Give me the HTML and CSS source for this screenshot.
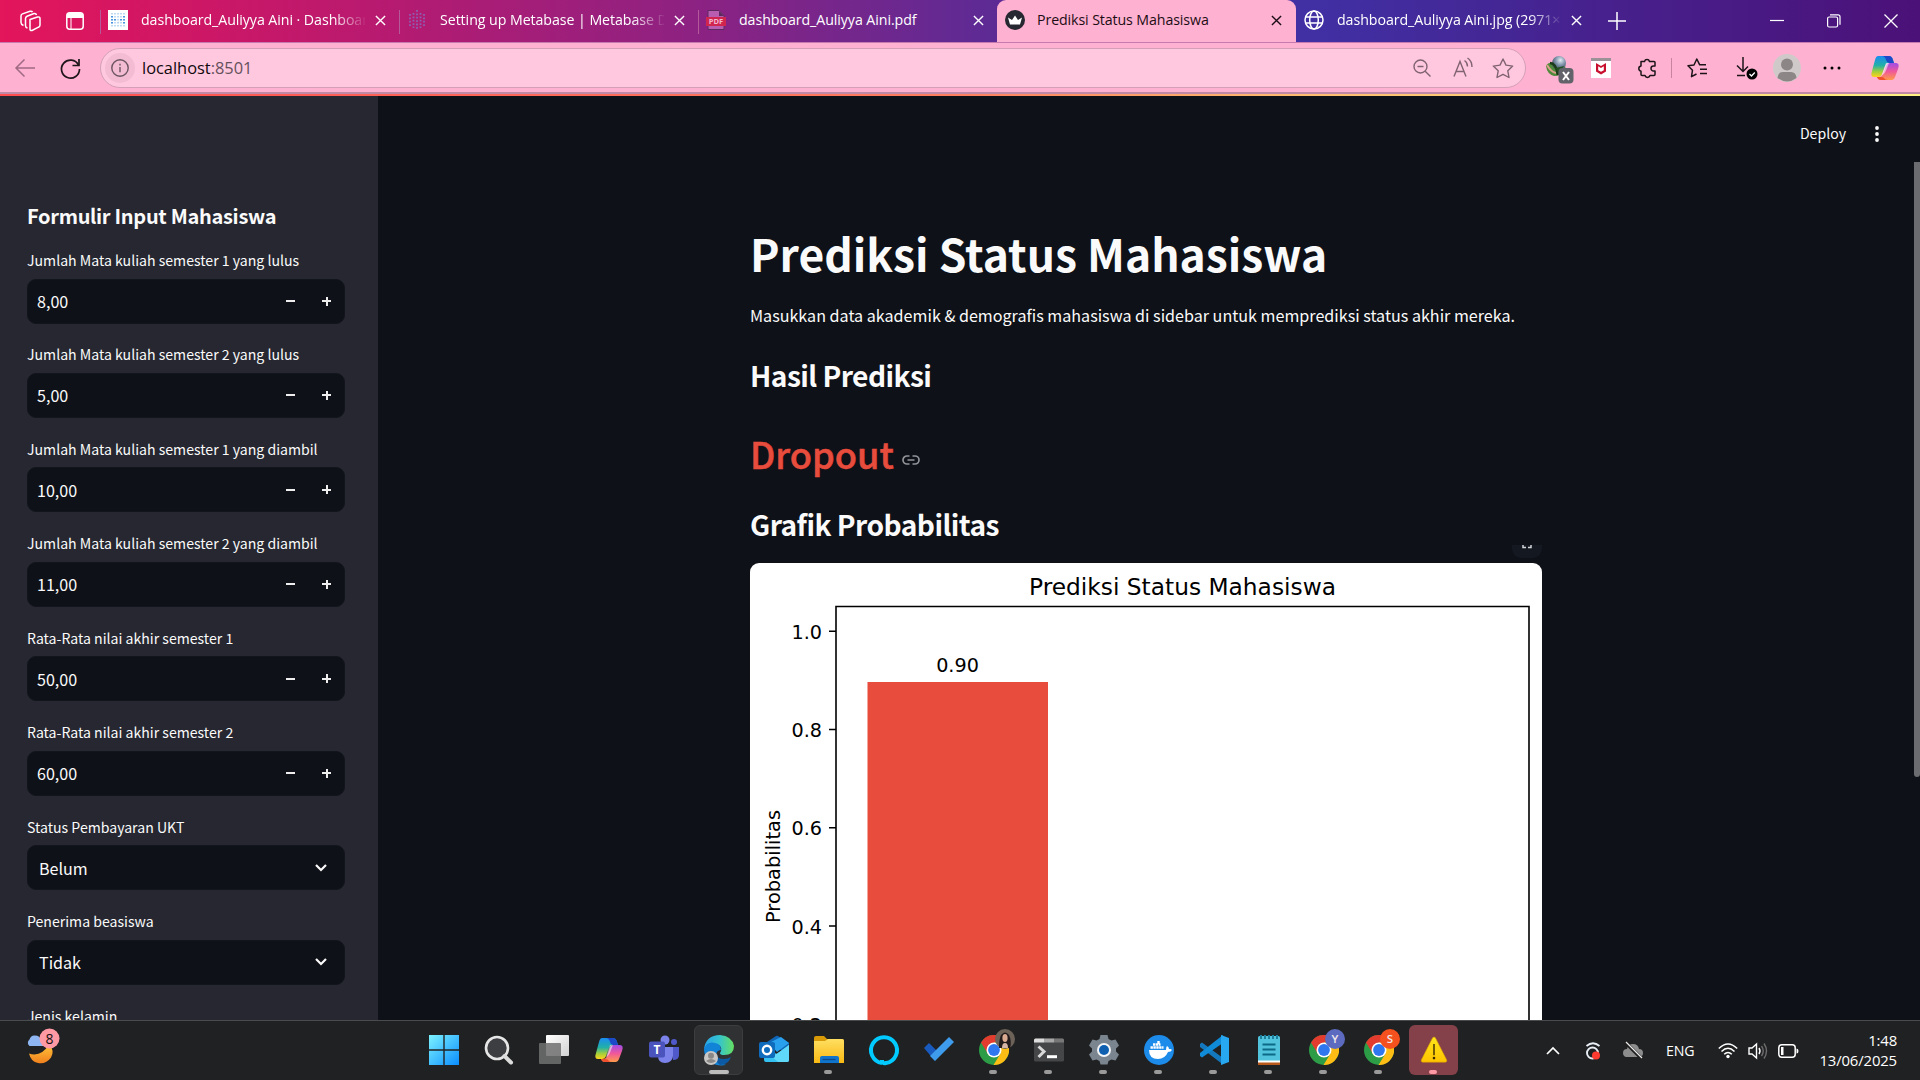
FILE: index.html
```html
<!DOCTYPE html>
<html lang="id">
<head>
<meta charset="utf-8">
<title>Prediksi Status Mahasiswa</title>
<link rel="stylesheet" href="styles.css">
</head>
<body>
<svg class="defs" width="0" height="0">
  <defs>
    <linearGradient id="cpA" x1="0" y1="0" x2="0" y2="1"><stop offset="0" stop-color="#1a8cf0"/><stop offset=".45" stop-color="#22b0a8"/><stop offset=".75" stop-color="#a5cf3a"/><stop offset="1" stop-color="#ffd21c"/></linearGradient>
    <linearGradient id="cpB" x1="0" y1="0" x2="0" y2="1"><stop offset="0" stop-color="#a04be8"/><stop offset=".5" stop-color="#f0589a"/><stop offset="1" stop-color="#ff9a4a"/></linearGradient>
    <linearGradient id="win" x1="0" y1="0" x2="1" y2="1"><stop offset="0" stop-color="#7df3ff"/><stop offset="1" stop-color="#0a8dff"/></linearGradient>
    <linearGradient id="edgeTop" x1="0" y1="0" x2="1" y2="0"><stop offset="0" stop-color="#2aa4e8"/><stop offset=".5" stop-color="#34c3d0"/><stop offset="1" stop-color="#66e060"/></linearGradient>
    <linearGradient id="folder" x1="0" y1="0" x2="0" y2="1"><stop offset="0" stop-color="#ffdf62"/><stop offset="1" stop-color="#f9b912"/></linearGradient>
    <linearGradient id="moon" x1="0" y1="0" x2="0" y2="1"><stop offset="0" stop-color="#ffc53a"/><stop offset="1" stop-color="#f0801e"/></linearGradient>
    <linearGradient id="warn" x1="0" y1="0" x2="0" y2="1"><stop offset="0" stop-color="#ffe61a"/><stop offset="1" stop-color="#ffc400"/></linearGradient>
    <linearGradient id="pane" x1="0" y1="0" x2="1" y2="1"><stop offset="0" stop-color="#fff"/><stop offset="1" stop-color="#d2d2d2"/></linearGradient>
    <radialGradient id="globe" cx=".6" cy=".3" r=".7"><stop offset="0" stop-color="#e4ebf2"/><stop offset=".5" stop-color="#7e93aa"/><stop offset="1" stop-color="#3a4a5c"/></radialGradient>
    <symbol id="copilot" viewBox="0 0 30 30">
      <path d="M8 3h11q3 0 4 4l1 3h-6q-2 0-3 3l-3 8q-1 3-4 3H4Q0 24 2 18L5 7q1-4 3-4z" fill="url(#cpA)"/>
      <path d="M12 3h7q3 0 4 4l1 3h-5q-2 0-3-3-1-4-4-4z" fill="#1b49c8"/>
      <path d="M22 27H11q-3 0-4-3l2 0q3 0 4-3l3-8q1-3 4-3h6q4 0 2 6l-3 8q-1 3-3 3z" fill="url(#cpB)"/>
      <path d="M18 27h-7q-3 0-4-3h4q3 0 3 1 1 2 4 2z" fill="#f0502e"/>
      <path d="M16 10l-4 12q3-1 5-7l2-5z" fill="#fff" opacity=".55"/>
    </symbol>
    <symbol id="chrome" viewBox="0 0 30 30">
      <circle cx="15" cy="15" r="15" fill="#2c9c47"/>
      <path d="M2 7.500A15 15 0 0 1 28 7.500H15z M2 7.500 9 19l6-11.500z" fill="#e33b2e"/>
      <path d="M28 7.500A15 15 0 0 1 14.500 30L21.500 18.500 15 7.500z" fill="#fdbd14"/>
      <circle cx="15" cy="15" r="7.500" fill="#fff"/><circle cx="15" cy="15" r="5.900" fill="#2f77ee"/>
    </symbol>
    <symbol id="x" viewBox="0 0 12 12"><path d="M1 1l10 10M11 1L1 11" fill="none" stroke="currentColor" stroke-width="1.500"/></symbol>
  </defs>
</svg>

<header class="tabs">
  <div class="tabs-lead">
    <svg width="22" height="22" viewBox="0 0 22 22" fill="none" stroke="#fff" stroke-width="1.500" stroke-linejoin="round"><path d="M10 9.500 17.500 7q2.500-.500 2.500 1.500v6.500q0 1.500-1.500 2.200L12 20.500q-2 .500-2-1.500z"/><path d="M7.500 18q-2-.500-2-2.500V8.500q0-1.500 1.500-2.200L14 3.500q2-.400 2.500 1.500M3.500 15.500Q1 14.500 1 12.500V6Q1 4.500 2.500 3.900L10 1.300q2-.300 2.500 .800"/></svg>
    <svg width="18" height="18" viewBox="0 0 18 18"><rect x=".8" y=".8" width="16.400" height="16.400" rx="3" fill="none" stroke="#fff" stroke-width="1.500"/><path d="M1 6V4q0-3 3-3h10q3 0 3 3v2z" fill="#fff"/><path d="M5 6v11" stroke="#fff" stroke-width="1"/></svg>
  </div>
  <div class="tab">
    <svg class="fav" viewBox="0 0 20 20"><rect width="20" height="20" fill="#fff"/><path d="M4 3v14M7 3v14M10 3v14M13 3v14M16 3v14" stroke="#a9cdef" stroke-width="1.500" stroke-dasharray="1.600 1.400"/><path d="M4 6v9M16 6v9M7 9v3M10 12h.1M13 9v3" fill="none" stroke="#3f8ede" stroke-width="1.800" stroke-dasharray="1.600 1.400"/></svg>
    <span class="tab-name fade">dashboard_Auliyya Aini · Dashboard</span><svg class="close"><use href="#x"/></svg>
  </div>
  <div class="tab">
    <svg class="fav" viewBox="0 0 20 20"><path d="M3 4v13M6.500 3v15M10 0v20M13.500 3v15M17 4v13" stroke="#8d5fb0" stroke-width="1.800" stroke-dasharray="1.800 1.600"/></svg>
    <span class="tab-name fade">Setting up Metabase | Metabase Docs</span><svg class="close"><use href="#x"/></svg>
  </div>
  <div class="tab">
    <svg class="fav" viewBox="0 0 20 20"><path d="M2 .5h11l5 5V19.500H2z" fill="#b85db0" stroke="#5d2a60"/><path d="M13 1v5h5" fill="#5d2a60"/><rect x="0" y="7" width="20" height="9" fill="#d0254f"/><text x="10" y="14.300" font-size="7.500" text-anchor="middle" class="pdf">PDF</text></svg>
    <span class="tab-name">dashboard_Auliyya Aini.pdf</span><svg class="close"><use href="#x"/></svg>
  </div>
  <div class="tab active">
    <svg class="fav" viewBox="0 0 20 20"><circle cx="10" cy="10" r="10" fill="#262730"/><path d="M3 7.500l4 2.500 3-4.500 3 4.500 4-2.500-2 7H5z" fill="#fff"/></svg>
    <span class="tab-name">Prediksi Status Mahasiswa</span><svg class="close"><use href="#x"/></svg>
  </div>
  <div class="tab">
    <svg class="fav" viewBox="0 0 20 20" fill="none" stroke="#fff" stroke-width="1.500"><circle cx="10" cy="10" r="9"/><ellipse cx="10" cy="10" rx="4.300" ry="9"/><path d="M1.500 7h17M1.500 13h17"/></svg>
    <span class="tab-name fade">dashboard_Auliyya Aini.jpg (2971×1600)</span><svg class="close"><use href="#x"/></svg>
  </div>
  <svg class="newtab" width="18" height="18" viewBox="0 0 18 18"><path d="M9 0v18M0 9h18" stroke="#fff" stroke-width="1.500"/></svg>
  <div class="winbtns">
    <svg width="14" height="14"><path d="M0 6.500h14" stroke="#fff" stroke-width="1.200"/></svg>
    <svg width="14" height="14" fill="none" stroke="#fff" stroke-width="1.200"><rect x=".6" y="3" width="10" height="10" rx="1.500"/><path d="M3 .8h8q2 0 2 2v8"/></svg>
    <svg width="14" height="14"><path d="M.5.5l13 13M13.500.5l-13 13" stroke="#fff" stroke-width="1.300"/></svg>
  </div>
</header>

<div class="toolbar">
  <svg class="back" width="20" height="18" viewBox="0 0 20 18" fill="none" stroke="#a06a84" stroke-width="1.500"><path d="M20 9H1M9.500.5 1 9l8.500 8.500"/></svg>
  <svg class="reload" width="21" height="21" viewBox="0 0 21 21" fill="none" stroke="#1d1418" stroke-width="1.700"><path d="M18.500 7A9 9 0 1 0 19.500 11"/><path d="M19 1v6.500h-6.500"/></svg>
  <div class="address">
    <span class="info"><svg width="18" height="18" viewBox="0 0 18 18" fill="none" stroke="#6b5560" stroke-width="1.400"><circle cx="9" cy="9" r="8.200"/><path d="M9 8v5.200M9 4.800v1.600"/></svg></span>
    <span class="url">localhost<i>:8501</i></span>
    <svg width="18" height="18" viewBox="0 0 18 18" fill="none" stroke="#806370" stroke-width="1.400"><circle cx="7.500" cy="7.500" r="6.500"/><path d="M4.500 7.500h6M12.200 12.200l5.300 5.300"/></svg>
    <svg class="aloud" width="20" height="20" viewBox="0 0 20 20" fill="none" stroke="#806370" stroke-width="1.400"><path d="M1 18.500 7 3.500l6 15M3 13.500h8M11.500 2.500q3 2 3 6M14.500 0q4.500 3 4.500 9"/></svg>
    <svg width="22" height="20" viewBox="0 0 22 20" fill="none" stroke="#806370" stroke-width="1.400" stroke-linejoin="round"><path d="M11 1l3 6.100 6.700 1-4.900 4.700 1.200 6.700-6-3.200-6 3.200 1.200-6.700L1.300 8.100l6.700-1z"/></svg>
  </div>
  <div class="exts">
    <svg class="idm" width="30" height="30" viewBox="0 0 30 30"><path d="M2 11q2-4 7-3l4 5 8-2 1 4q-5 6-12 6-7-2-8-10z" fill="#4f8a3a"/><circle cx="15" cy="8" r="7" fill="url(#globe)"/><path d="M3 10q4 7 9 8" stroke="#d9a08c" stroke-width="2" fill="none"/><path d="M6 8q6 0 8 12" stroke="#1c3c1c" stroke-width="2.600" fill="none"/><path d="M12 13l8-2-5 8z" fill="#25501f"/><rect x="14.500" y="13" width="15" height="15.500" rx="4" fill="#62636a"/><path d="M19 17l6 8M25 17l-6 8" stroke="#fff" stroke-width="2"/></svg>
    <svg class="mca" width="20" height="20" viewBox="0 0 20 20"><rect width="20" height="20" fill="#fff"/><rect width="20" height="3" fill="#9a9296"/><path d="M5 5l5 3 5-3v8.500l-5 3-5-3z" fill="#c8102e"/><path d="M7.200 8.200 10 10l2.800-1.800v4L10 13.800l-2.800-1.600z" fill="#fff"/></svg>
    <svg class="puz" width="20" height="21" viewBox="0 0 20 21" fill="none" stroke="#1d1418" stroke-width="1.500" stroke-linejoin="round"><path d="M4 3.500h3.500a2.600 2.600 0 0 1 5 0H17q1 0 1 1v3.500h-1.500a2.400 2.400 0 0 0 0 5H18v3.500q0 1-1 1h-4a2.600 2.600 0 0 1-5 0H5q-1 0-1-1v-3.300a2.700 2.700 0 0 1 0-5.300z"/></svg>
    <span class="sep"></span>
    <svg class="favs" width="21" height="20" viewBox="0 0 21 20" fill="none" stroke="#1d1418" stroke-width="1.500" stroke-linejoin="round"><path d="M19 6.800h-6.300L9.800 1 7 7l-6 .8 4.500 4.400-1 6.500L9.500 16M13 11.300h7M13 15.500h7"/></svg>
    <svg class="dl" width="23" height="24" viewBox="0 0 23 24" fill="none" stroke="#1d1418" stroke-width="1.500"><path d="M7 1v14M1 9.500 7 15.500l5-5M1 19.500h8"/><circle cx="16" cy="18" r="5.500" fill="#000" stroke="none"/><path d="M13.500 18l2 2 3.300-3.500" stroke="#fff" stroke-width="1.300"/></svg>
    <svg class="prof" width="28" height="28" viewBox="0 0 28 28"><circle cx="14" cy="14" r="14" fill="#cfcac9"/><circle cx="14" cy="10.500" r="6" fill="#8c8786"/><path d="M4.500 24Q5 18 10 18h8q5 0 5.500 6-9.500 7-19 0z" fill="#8c8786"/></svg>
    <svg class="dots" width="18" height="4"><circle cx="2" cy="2" r="1.500"/><circle cx="9" cy="2" r="1.500"/><circle cx="16" cy="2" r="1.500"/></svg>
    <svg class="cop" width="30" height="30"><use href="#copilot"/></svg>
  </div>
</div>
<div class="accent"></div>

<div class="app">
  <aside class="sidebar">
    <h2>Formulir Input Mahasiswa</h2>
    <div class="field"><label>Jumlah Mata kuliah semester 1 yang lulus</label><div class="box"><span>8,00</span><b class="minus"></b><b class="plus"></b></div></div>
    <div class="field"><label>Jumlah Mata kuliah semester 2 yang lulus</label><div class="box"><span>5,00</span><b class="minus"></b><b class="plus"></b></div></div>
    <div class="field"><label>Jumlah Mata kuliah semester 1 yang diambil</label><div class="box"><span>10,00</span><b class="minus"></b><b class="plus"></b></div></div>
    <div class="field"><label>Jumlah Mata kuliah semester 2 yang diambil</label><div class="box"><span>11,00</span><b class="minus"></b><b class="plus"></b></div></div>
    <div class="field"><label>Rata-Rata nilai akhir semester 1</label><div class="box"><span>50,00</span><b class="minus"></b><b class="plus"></b></div></div>
    <div class="field"><label>Rata-Rata nilai akhir semester 2</label><div class="box"><span>60,00</span><b class="minus"></b><b class="plus"></b></div></div>
    <div class="field"><label>Status Pembayaran UKT</label><div class="box select"><span>Belum</span><svg width="12" height="8" viewBox="0 0 12 8"><path d="M1 1l5 5 5-5" fill="none" stroke="#fafafa" stroke-width="2.200"/></svg></div></div>
    <div class="field"><label>Penerima beasiswa</label><div class="box select"><span>Tidak</span><svg width="12" height="8" viewBox="0 0 12 8"><path d="M1 1l5 5 5-5" fill="none" stroke="#fafafa" stroke-width="2.200"/></svg></div></div>
    <div class="field"><label>Jenis kelamin</label></div>
  </aside>
  <main class="main">
    <div class="apphead"><span>Deploy</span><svg width="4" height="16"><circle cx="2" cy="2" r="1.900"/><circle cx="2" cy="8" r="1.900"/><circle cx="2" cy="14" r="1.900"/></svg></div>
    <div class="content">
      <h1>Prediksi Status Mahasiswa</h1>
      <p>Masukkan data akademik &amp; demografis mahasiswa di sidebar untuk memprediksi status akhir mereka.</p>
      <h2>Hasil Prediksi</h2>
      <div class="result"><span>Dropout</span><svg width="18" height="10" viewBox="0 0 18 10" fill="none" stroke="#92949a" stroke-width="1.700"><path d="M7.500 1H5a4 4 0 0 0 0 8h2.500M10.500 1H13a4 4 0 0 1 0 8h-2.500M5.500 5h7"/></svg></div>
      <h2 class="second">Grafik Probabilitas</h2>
      <div class="full"><svg width="10" height="4"><path d="M1 0v2.500h3M9 0v2.500H6" fill="none" stroke="#d0d2d6" stroke-width="1.500"/></svg></div>
      <div class="card">
        <svg width="792" height="594" viewBox="0 0 792 594" class="chart">
          <text x="432.500" y="31.500" text-anchor="middle" font-size="23.300">Prediksi Status Mahasiswa</text>
          <rect x="117.500" y="119" width="180.500" height="450" fill="#e84c3d"/>
          <path d="M86 570V43.500H779V570M79 68.300h7M79 166.500h7M79 264.700h7M79 363h7M79 461.300h7" fill="none" stroke="#000" stroke-width="1.600"/>
          <g text-anchor="end"><text x="72" y="75.700">1.0</text><text x="72" y="174">0.8</text><text x="72" y="272">0.6</text><text x="72" y="370.500">0.4</text><text x="72" y="468.500">0.2</text></g>
          <text x="207.500" y="109" text-anchor="middle">0.90</text>
          <text transform="translate(30 303.500) rotate(-90)" text-anchor="middle" font-size="19.400">Probabilitas</text>
        </svg>
      </div>
    </div>
    <div class="thumb"></div>
  </main>
</div>

<footer class="taskbar">
  <svg class="weather" width="36" height="36" viewBox="0 0 36 36"><path d="M3 24.500q12 4 20-9 6 6 2 13-5 7-13 5.500Q5 33 3 24.500z" fill="url(#moon)"/><path d="M3.500 17a4 4 0 0 1 0-6.500Q5 6 9 6.500q5 0 6 4.500h2v6z" fill="#8db6f2"/><circle cx="23.500" cy="9.500" r="10" fill="#ff99a4"/><text x="23.500" y="14.500" text-anchor="middle" font-size="14" class="dark">8</text></svg>
  <div class="apps">
    <div class="app-ic"><svg viewBox="0 0 30 30"><path d="M0 0h14.300v14.300H0zM15.700 0H30v14.300H15.700zM0 15.700h14.300V30H0zM15.700 15.700H30V30H15.700z" fill="url(#win)"/></svg></div>
    <div class="app-ic"><svg viewBox="0 0 30 30"><circle cx="13" cy="13" r="11" fill="#3c3e42" stroke="#e6e6e6" stroke-width="2.600"/><path d="M20.500 21l6.500 6.500" stroke="#dcdcdc" stroke-width="4" stroke-linecap="round"/></svg></div>
    <div class="app-ic"><svg viewBox="0 0 30 30"><rect x="7" y="0" width="23" height="21" rx="1" fill="url(#pane)"/><rect x="0" y="8" width="22" height="21" rx="1" fill="#707070" opacity=".85"/></svg></div>
    <div class="app-ic"><svg viewBox="0 0 30 30"><use href="#copilot"/></svg></div>
    <div class="app-ic"><svg viewBox="0 0 30 30"><circle cx="16" cy="5" r="4.500" fill="#7b83eb"/><circle cx="25" cy="7" r="3" fill="#5059c9"/><path d="M22 12h8v8q0 5-6 5z" fill="#5059c9"/><path d="M9 12h15v9q-1 7-8 7t-7-7z" fill="#7b83eb"/><rect x="0" y="6.500" width="16" height="16" rx="2" fill="#4b53bc"/><text x="8" y="18.500" font-size="12" text-anchor="middle" class="white">T</text></svg></div>
    <div class="app-ic focus"><svg viewBox="0 0 30 30"><path d="M0 14Q2 0 16 0q12 1 14 11 0 9-10 9-4 0-4-2 3-5-1-8-6-3-11 0z" fill="url(#edgeTop)"/><path d="M0 14Q3 6 11 8q6 1 6 7-5 0-5 6 2 7 10 9-12 2-18-5-4-5-4-11z" fill="#1184d8"/><path d="M12 19q1 5 8 5 4 0 7-2-3 8-11 8-5-3-4-11z" fill="#0c59a4"/><circle cx="7" cy="23" r="7" fill="#c9c7c5"/><circle cx="7" cy="20.800" r="3" fill="#8a8886"/><path d="M2 26q5-4 10 0-5 4-10 0z" fill="#8a8886"/></svg><i></i></div>
    <div class="app-ic"><svg viewBox="0 0 30 30"><path d="M5 9 17 1q1-.500 2 0l11 7v7H5z" fill="#1066b5"/><path d="M10 8 22 2l8 6-12 9z" fill="#28a0ee"/><path d="M5 13l13 6 12-9v15q0 2-2 2H7q-2 0-2-2z" fill="#35c1f1"/><path d="M30 10v15q0 2-2 2h-9l-6-5z" fill="#5fd8fa"/><rect x="0" y="7" width="16" height="16" rx="2" fill="#0f6cbd"/><circle cx="8" cy="15" r="4.200" fill="none" stroke="#fff" stroke-width="2.400"/></svg></div>
    <div class="app-ic run"><svg viewBox="0 0 30 30"><path d="M0 3q0-2 2-2h8l3 3h15q2 0 2 2v6H0z" fill="#d99a08"/><path d="M0 6h11l3-2h14q2 0 2 2v22H0z" fill="url(#folder)"/><path d="M6 28v-5q0-2 2-2h15q2 0 2 2v5z" fill="#1174cc"/><path d="M8.500 24.500h13" stroke="#0a4a8a" stroke-width="1.300"/></svg><i></i></div>
    <div class="app-ic"><svg viewBox="0 0 30 30"><path d="M13 28a13 13 0 1 1 4 0q-4 1-4-3" fill="none" stroke="#00caff" stroke-width="4"/></svg></div>
    <div class="app-ic"><svg viewBox="0 0 30 30"><path d="M0 13l5-5 9 9-3 9z" fill="#185abd"/><path d="M11 26 6 21 25 2l5 5z" fill="#3f9bec"/></svg></div>
    <div class="app-ic run"><svg viewBox="0 0 30 30"><use href="#chrome"/><circle cx="26" cy="4" r="10" fill="#6c6258"/><path d="M20 13q0-9 2-13 4-5 8 0 3 6 1 13z" fill="#231a1c"/><ellipse cx="26" cy="3" rx="2.600" ry="4" fill="#d9aa90"/><path d="M23 13q0-5 3-5t3 5z" fill="#d4b4a4"/></svg><i></i></div>
    <div class="app-ic run"><svg viewBox="0 0 30 30"><rect y="3.500" width="30" height="23" rx="1.500" fill="#444648"/><path d="M0 7.500V5q0-1.500 1.500-1.500H10v4z" fill="#ddd"/><path d="M10 3.500h10v4H10z" fill="#a7a7a7"/><path d="M20 3.500h8.500Q30 3.500 30 5v2.500H20z" fill="#777"/><path d="M4.500 11.500l5.500 5-5.500 5.500" fill="none" stroke="#d8d8d8" stroke-width="3"/><path d="M13 21.700h10" stroke="#fff" stroke-width="3"/></svg><i></i></div>
    <div class="app-ic run"><svg viewBox="0 0 30 30"><path d="M11.500 0h7l1 4 3 1.500 4-1 3.500 6-3 3v3l3 3-3.500 6-4-1-3 1.500-1 3.500h-7l-1-3.500-3-1.500-4 1L0 19.500l3-3v-3l-3-3 3.500-6 4 1 3-1.500z" fill="#7a858f"/><circle cx="15" cy="15" r="7" fill="#f4f6f8"/><circle cx="15" cy="15" r="5" fill="#0f5fb0"/></svg><i></i></div>
    <div class="app-ic run"><svg viewBox="0 0 30 30"><circle cx="15" cy="15" r="15" fill="#1d8bea"/><path d="M5 15h17q0-3 1-4 2 1 2 3 2-.500 3 1-1 2-4 2-3 7-10 7-9 0-9-9z" fill="#fff"/><path d="M6.500 12.500h13M9 9.500h7.500" stroke="#fff" stroke-width="2.400" stroke-dasharray="2.400 .5"/><path d="M14.500 6v3" stroke="#fff" stroke-width="2.400"/></svg><i></i></div>
    <div class="app-ic run"><svg viewBox="0 0 30 30"><path d="M1 9l2-1.500L24 23v6.500L1 12z" fill="#1478be"/><path d="M1 21l2 1.500L24 8V0L1 18z" fill="#0f8bd8"/><path d="M22 0l8 3v24l-8 3z" fill="#29a8f2"/></svg><i></i></div>
    <div class="app-ic run"><svg viewBox="0 0 30 30"><rect x="4" y="1" width="22" height="28" rx="1.500" fill="#52c3dd"/><path d="M4 26.500h22V30H4z" fill="#b85a1c"/><path d="M4 25.500h22v2H4z" fill="#fff"/><path d="M8.500 9.500h13M8.500 14.500h13M8.500 19.500h13" stroke="#0d6a86" stroke-width="2"/><path d="M7 0v4M11 0v4M15 0v4M19 0v4M23 0v4" stroke="#1c7f9c" stroke-width="2"/></svg><i></i></div>
    <div class="app-ic run"><svg viewBox="0 0 30 30"><use href="#chrome"/><circle cx="26" cy="4" r="10" fill="#5c6bc0"/><text x="26" y="8.300" font-size="11.500" text-anchor="middle" class="initial">Y</text></svg><i></i></div>
    <div class="app-ic run"><svg viewBox="0 0 30 30"><use href="#chrome"/><circle cx="26" cy="4" r="10" fill="#f4511e"/><text x="26" y="8.300" font-size="11.500" text-anchor="middle" class="initial">S</text></svg><i></i></div>
    <div class="app-ic run alert"><svg viewBox="0 0 30 30"><path d="M13.500 2q1.500-2 3 0l12 23.500q.8 2.500-1.500 2.500H3q-2.300 0-1.500-2.500z" fill="url(#warn)" stroke="#d89b00" stroke-width=".6"/><path d="M15 8.500v12" stroke="#3a2a00" stroke-width="1.500"/><circle cx="15" cy="23.700" r="1.400" fill="#3a2a00"/></svg><i></i></div>
  </div>
  <div class="tray">
    <svg width="14" height="8"><path d="M1 7l6-6 6 6" fill="none" stroke="#fff" stroke-width="1.700"/></svg>
    <svg class="t2" width="16" height="20" viewBox="0 0 16 20"><path d="M1.500 5q6.500-5.500 13 0" fill="none" stroke="#e8eef6" stroke-width="1.800"/><circle cx="7.500" cy="12" r="5.500" fill="none" stroke="#e8eef6" stroke-width="1.900"/><circle cx="11" cy="14.500" r="4" fill="#ff3b30"/></svg>
    <svg class="t3" width="20" height="18" viewBox="0 0 20 18"><path d="M3 15Q0 14 0 11q0-4 4-4 1-5 6-5t6 5q4 0 4 4 0 3-3 4z" fill="#8d8d8d"/><path d="M2 0l17 17" stroke="#202020" stroke-width="3.500"/><path d="M3 0l16 16" stroke="#e8e8e8" stroke-width="1.300"/></svg>
    <span class="eng">ENG</span>
    <svg class="wifi" width="20" height="16" viewBox="0 0 20 16" fill="none" stroke="#fff" stroke-width="1.500"><path d="M.8 5.500q9.200-9 18.400 0M3.500 8.500q6.500-6.500 13 0M6.200 11.300q3.800-3.800 7.600 0"/><circle cx="10" cy="13.500" r="1.700" fill="#fff" stroke="none"/></svg>
    <svg class="vol" width="20" height="18" viewBox="0 0 20 18" fill="none" stroke="#fff" stroke-width="1.400"><path d="M1 6h3l4.500-4v14L4 12H1z"/><path d="M11 6q2 3 0 6"/><path d="M13.500 4q3.500 5 0 10M16 1.500q5 7.500 0 15" stroke="#6c6c6c"/></svg>
    <svg class="bat" width="21" height="14" viewBox="0 0 21 14"><rect x=".8" y=".8" width="16.400" height="12.400" rx="3" fill="none" stroke="#fff" stroke-width="1.500"/><rect x="3" y="3" width="2.500" height="8" fill="#fff"/><path d="M18.500 4.500q2 0 2 2.500t-2 2.500z" fill="#fff"/></svg>
    <div class="clock"><span>1:48</span><span>13/06/2025</span></div>
  </div>
</footer>
</body>
</html>
```
FILE: styles.css
```css
* { box-sizing: border-box; }
body {
  margin: 0; width: 1920px; height: 1080px; overflow: hidden;
  display: flex; flex-direction: column; background: #0e1117;
  font-family: "Open Sans", "Noto Sans", sans-serif;
}
svg { display: block; flex: none; overflow: visible; }
.defs { position: absolute; }

/* browser tabs */
.tabs {
  height: 42px; flex: none; display: flex; align-items: center; color: #fff;
  background: linear-gradient(90deg, #e3155b 0, #c4186a 280px, #922180 660px, #5f2a94 980px, #4030a4 1310px, #47208c 1620px, #4b1178 1920px);
}
.tabs-lead { width: 100px; padding: 0 16px 0 20px; display: flex; gap: 24px; align-items: center; }
.tab { width: 299px; height: 42px; display: flex; align-items: center; padding-left: 8px; position: relative; flex: none; padding-bottom: 2px; }
.tab::before { content: ""; position: absolute; left: 0; top: 10px; width: 1px; height: 24px; background: #b45a9a; }
.tab.active { background: #ffb1d1; color: #1b0d14; border-radius: 9px 9px 0 0; }
.tab.active::before, .tab.active + .tab::before { display: none; }
.fav { width: 20px; height: 20px; }
.tab-name { width: 224px; margin: -2px 0 0 13px; font-size: 14.200px; letter-spacing: -.06px; white-space: nowrap; overflow: hidden; }
.active .tab-name { margin-left: 12px; letter-spacing: -.1px; }
.fade { -webkit-mask-image: linear-gradient(90deg, #000 192px, transparent 226px); mask-image: linear-gradient(90deg, #000 192px, transparent 226px); }
.close { width: 11px; height: 11px; margin-left: 10px; }
.pdf { fill: #f2b8d4; font-weight: 700; }
.newtab { margin-left: 13px; }
.winbtns { margin-left: auto; display: flex; gap: 43px; padding-right: 22px; }

/* toolbar */
.toolbar { height: 50px; flex: none; display: flex; align-items: center; background: #ffb1d1; padding: 1px 0 0 15px; border-top: 1px solid #c57bb0; }
.back { margin-right: 25px; }
.reload { margin-right: 19px; }
.address { width: 1426px; height: 40px; border: 1px solid #d3a0b8; border-radius: 20px; background: #ffc8df; display: flex; align-items: center; padding: 0 11px 0 4px; gap: 22px; }
.info { width: 30px; height: 30px; border-radius: 50%; background: #f3bcd3; display: grid; place-items: center; }
.url { flex: 1; margin: -1px 0 0 -15px; font-size: 16.400px; color: #10080c; }
.url i { font-style: normal; color: #65505c; }
.aloud { margin-right: -3px; }
.exts { display: flex; align-items: center; }
.idm { margin: 4px 0 0 18px; }
.mca { margin-left: 17px; }
.puz { margin-left: 26px; }
.sep { width: 1px; height: 20px; background: #c8849f; margin-left: 14px; }
.favs { margin-left: 15px; }
.dl { margin-left: 28px; }
.prof { margin-left: 14px; }
.dots { margin-left: 22px; }
.cop { margin-left: 29px; }
.accent { height: 4px; flex: none; border-top: 2px solid #c089a5; background: linear-gradient(90deg, #ff4d50, #ff7f60 960px, #ffbd70 1300px, #fff283); }

/* Streamlit page */
.app { flex: 1; min-height: 0; display: flex; overflow: hidden; font-family: "Noto Sans CJK SC", sans-serif; color: #fafafa; }
.sidebar { width: 378px; flex: none; background: #262730; padding: 102px 33px 0 27px; overflow: hidden; }
.sidebar h2 { margin: 0; height: 49px; line-height: 36px; font-size: 20px; font-weight: 700; letter-spacing: -.3px; white-space: nowrap; }
.field { height: 94.450px; }
.field label { display: block; height: 31.500px; line-height: 27px; font-size: 14.100px; white-space: nowrap; }
.box { height: 45px; background: #0e1117; border: 1px solid #12151c; border-radius: 9px; display: flex; align-items: center; padding: 0 13px 0 9px; font-size: 16.100px; line-height: 24px; }
.box span { flex: 1; }
.box b { width: 9px; height: 9px; }
.minus { background: linear-gradient(#eee, #eee) center / 9px 2px no-repeat; margin-right: 27px; }
.plus { background: linear-gradient(#eee, #eee) center / 9px 2px no-repeat, linear-gradient(#eee, #eee) center / 2px 9px no-repeat; }
.select { padding: 0 17px 0 11px; }
.main { flex: 1; position: relative; overflow: hidden; }
.apphead { height: 76px; display: flex; justify-content: flex-end; align-items: center; gap: 29px; padding-right: 41px; font-size: 14.100px; }
.apphead span { margin-top: -2px; }
.apphead svg { fill: #fafafa; }
.content { width: 792px; margin-left: 372px; }
.content h1 { margin: 49px 0 0; height: 68px; line-height: 64px; font-size: 44.400px; font-weight: 700; white-space: nowrap; }
.content p { margin: 13px 0 0; height: 27px; line-height: 27px; font-size: 16.120px; white-space: nowrap; }
.content h2 { margin: 26px 0 0; height: 40px; line-height: 40px; font-size: 28.200px; font-weight: 700; letter-spacing: -.56px; }
.result { height: 52px; margin-top: 32px; display: flex; align-items: center; gap: 8px; color: #e84c3d; font-size: 36.200px; line-height: 52px; font-weight: 500; -webkit-text-stroke: .5px #e84c3d; }
.result svg { margin-top: 13px; }
.content .second { margin-top: 25px; height: 41px; }
.full { width: 30px; height: 13px; margin: 0 0 5px auto; background: #141820; border-radius: 0 0 9px 9px; display: flex; justify-content: center; }
.card { background: #fff; border-radius: 9px 9px 0 0; }
.chart { font-family: "DejaVu Sans", sans-serif; font-size: 19.200px; fill: #000; }
.thumb { position: absolute; right: 0; top: 50px; width: 6px; height: 615px; margin-top: 16px; background: #6b6c70; border-radius: 0 0 3px 3px; }

/* Windows taskbar */
.taskbar { height: 60px; flex: none; background: #202122; border-top: 1px solid #4a4b4c; display: flex; align-items: center; color: #fff; padding-left: 26px; position: relative; }
.weather { margin-bottom: 7px; }
.weather .dark { fill: #111; }
.apps { display: flex; gap: 6px; margin: -1px 0 0 357px; }
.app-ic { width: 49px; height: 50px; border-radius: 6px; position: relative; display: grid; place-items: center; }
.app-ic svg { width: 30px; height: 30px; }
.app-ic i { position: absolute; bottom: 1px; left: 20px; width: 8px; height: 4px; border-radius: 2px; background: #9a9a9a; }
.focus { background: #303133; border: 1px solid #3c3d3f; }
.focus i { left: 14px; width: 20px; bottom: 0; background: #bcbcbc; }
.alert { background: #84414a; }
.app-ic.alert svg { width: 28px; }
.alert i { background: #ff99a4; }
.white { fill: #fff; font-weight: 700; }
.initial { fill: #f1e6ea; font-weight: 600; }
.tray { margin-left: auto; display: flex; align-items: center; padding-right: 23px; }
.t2 { margin-left: 25px; }
.t3 { margin-left: 22px; }
.eng { margin: -1px 0 0 23px; width: 30px; font-size: 14.200px; letter-spacing: -.2px; }
.wifi { margin-left: 22px; }
.vol { margin-left: 10px; }
.bat { margin-left: 10px; }
.clock { width: 98px; margin-top: -2px; display: flex; flex-direction: column; align-items: flex-end; font-size: 14.900px; line-height: 20px; letter-spacing: -.15px; }
```
